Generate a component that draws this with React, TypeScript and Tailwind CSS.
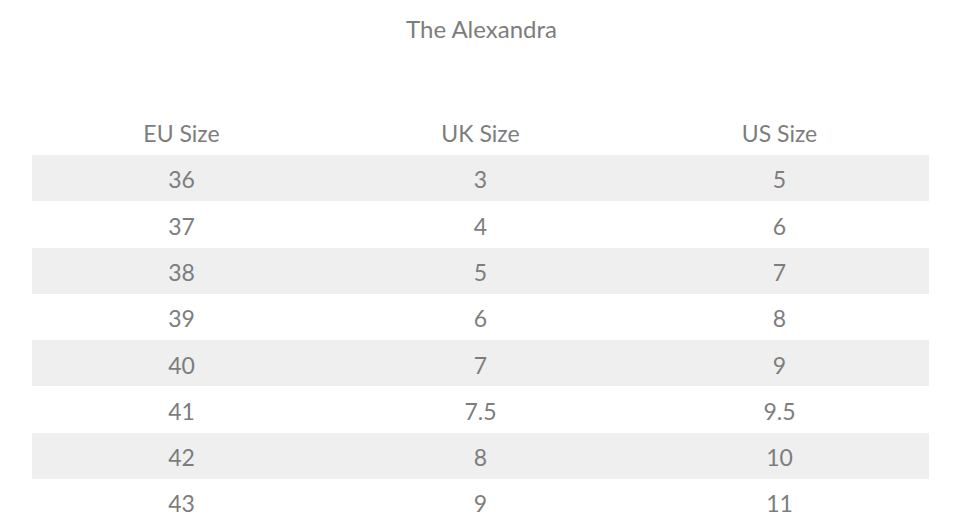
const rows = [
  ["36", "3", "5"],
  ["37", "4", "6"],
  ["38", "5", "7"],
  ["39", "6", "8"],
  ["40", "7", "9"],
  ["41", "7.5", "9.5"],
  ["42", "8", "10"],
  ["43", "9", "11"],
];

export default function App() {
  return (
    <div className="min-h-screen bg-white font-['Lato',sans-serif] text-[#7d7d7d]">
      <h1 className="pt-[14px] text-center text-[24px] leading-[30px]">The Alexandra</h1>
      <table className="mx-[32px] mt-[65px] w-[897px] table-fixed border-collapse text-center text-[23px]">
        <thead>
          <tr className="h-[46px]">
            <th className="pt-[2px] font-normal">EU Size</th>
            <th className="pt-[2px] font-normal">UK Size</th>
            <th className="pt-[2px] font-normal">US Size</th>
          </tr>
        </thead>
        <tbody>
          {rows.map((r, i) => (
            <tr key={r[0]} className={i % 2 === 0 ? "h-[46.3px] bg-[#efefef]" : "h-[46.3px]"}>
              {r.map((c, j) => (
                <td key={j} className="pt-[3px]">{c}</td>
              ))}
            </tr>
          ))}
        </tbody>
      </table>
    </div>
  );
}
